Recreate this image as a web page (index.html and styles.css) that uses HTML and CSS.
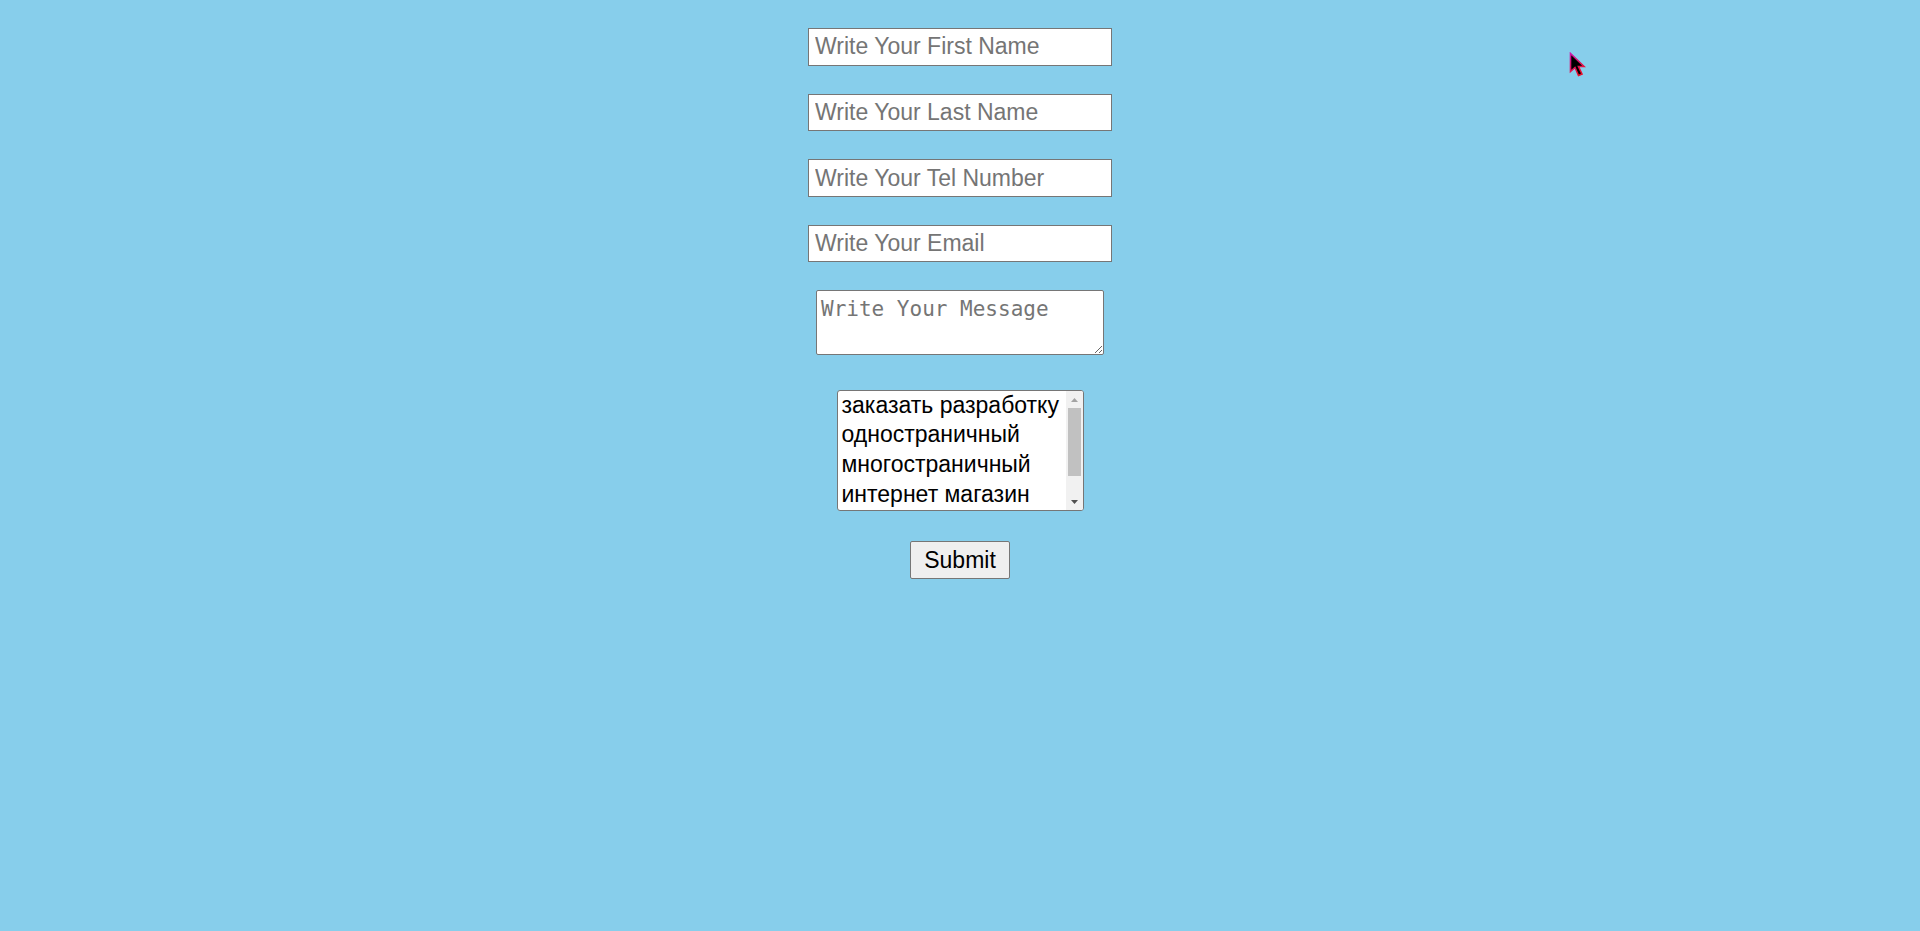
FILE: index.html
```html
<!DOCTYPE html>
<html lang="ru">
<head>
<meta charset="utf-8">
<title>Form</title>
<link rel="stylesheet" href="styles.css">
</head>
<body>
<form class="form" action="#" onsubmit="return false">
  <input class="field" type="text" placeholder="Write Your First Name">
  <input class="field" type="text" placeholder="Write Your Last Name">
  <input class="field" type="tel" placeholder="Write Your Tel Number">
  <input class="field" type="email" placeholder="Write Your Email">
  <textarea class="message" placeholder="Write Your Message"></textarea>
  <div class="choice" role="listbox" tabindex="0">
    <div class="opts">
      <div class="opt" role="option">заказать разработку</div>
      <div class="opt" role="option">одностраничный</div>
      <div class="opt" role="option">многостраничный</div>
      <div class="opt" role="option">интернет магазин</div>
    </div>
    <div class="sbar" aria-hidden="true">
      <div class="sbtn">
        <svg width="7" height="4" viewBox="0 0 7 4"><path d="M0 4 L3.5 0 L7 4 Z" fill="#a3a3a3"/></svg>
      </div>
      <div class="strack"><div class="sthumb"></div></div>
      <div class="sbtn">
        <svg width="7" height="4" viewBox="0 0 7 4"><path d="M0 0 L7 0 L3.5 4 Z" fill="#505050"/></svg>
      </div>
    </div>
  </div>
  <button class="submit" type="submit">Submit</button>
</form>
<svg class="cursor" width="18" height="28" viewBox="0 0 18 28">
  <defs>
    <linearGradient id="cg" x1="0" y1="0" x2="0.4" y2="1">
      <stop offset="0" stop-color="#c81aa8"/>
      <stop offset="1" stop-color="#e8102c"/>
    </linearGradient>
  </defs>
  <path d="M1.5 1.5 L1.5 19.5 L6 15.5 L9.5 23.5 L13 22 L9.5 14.5 L15 14.5 Z" fill="#000" stroke="url(#cg)" stroke-width="1.6" stroke-linejoin="miter"/>
</svg>
</body>
</html>
```
FILE: styles.css
```css
html, body {
  margin: 0;
  padding: 0;
  height: 100%;
}

body {
  background: #87ceeb;
  font-family: "Liberation Sans", Arial, sans-serif;
  position: relative;
  overflow: hidden;
}

.form {
  display: flex;
  flex-direction: column;
  align-items: center;
  padding-top: 28px;
}

.field {
  box-sizing: border-box;
  width: 304px;
  height: 37.5px;
  margin: 0 0 28.17px 0;
  padding: 0 6px;
  border: 1px solid #767676;
  border-radius: 0;
  background: #fff;
  font-family: "Liberation Sans", Arial, sans-serif;
  font-size: 23px;
  color: #000;
  outline: none;
}

.field::placeholder {
  color: #757575;
  opacity: 1;
}

.message {
  box-sizing: border-box;
  width: 288px;
  height: 64.6px;
  margin: -0.67px 0 0 0;
  padding: 6px 4px 3px;
  border: 1px solid #767676;
  border-radius: 2px;
  background: #fff;
  font-family: "DejaVu Sans Mono", "Liberation Mono", monospace;
  font-size: 21px;
  line-height: 24px;
  color: #000;
  outline: none;
  resize: both;
}

.message::placeholder {
  color: #757575;
  opacity: 1;
}

.choice {
  box-sizing: border-box;
  display: flex;
  width: 247px;
  height: 121px;
  margin-top: 35.7px;
  border: 1px solid #767676;
  border-radius: 3px;
  background: #fff;
  overflow: hidden;
  font-family: "Liberation Sans", Arial, sans-serif;
  font-size: 23px;
  color: #000;
  outline: none;
}

.opts {
  flex: 1;
  min-width: 0;
  overflow: hidden;
  padding-top: 0.5px;
}

.opt {
  padding: 0 2px 3.6px 4px;
  line-height: 26px;
  white-space: nowrap;
  color: #000;
  cursor: default;
}

.sbar {
  width: 17px;
  flex: none;
  display: flex;
  flex-direction: column;
  background: #f1f1f1;
}

.sbtn {
  height: 17px;
  flex: none;
  display: flex;
  align-items: center;
  justify-content: center;
}

.sbtn svg {
  display: block;
}

.strack {
  flex: 1;
  display: flex;
  flex-direction: column;
  align-items: center;
}

.sthumb {
  width: 13px;
  height: 68px;
  background: #c1c1c1;
}

.submit {
  box-sizing: border-box;
  width: 100px;
  height: 37.5px;
  margin-top: 30px;
  padding: 0;
  border: 1px solid #767676;
  border-radius: 2px;
  background: #efefef;
  font-family: "Liberation Sans", Arial, sans-serif;
  font-size: 23px;
  color: #000;
}

.cursor {
  position: absolute;
  left: 1569px;
  top: 52px;
}
```
